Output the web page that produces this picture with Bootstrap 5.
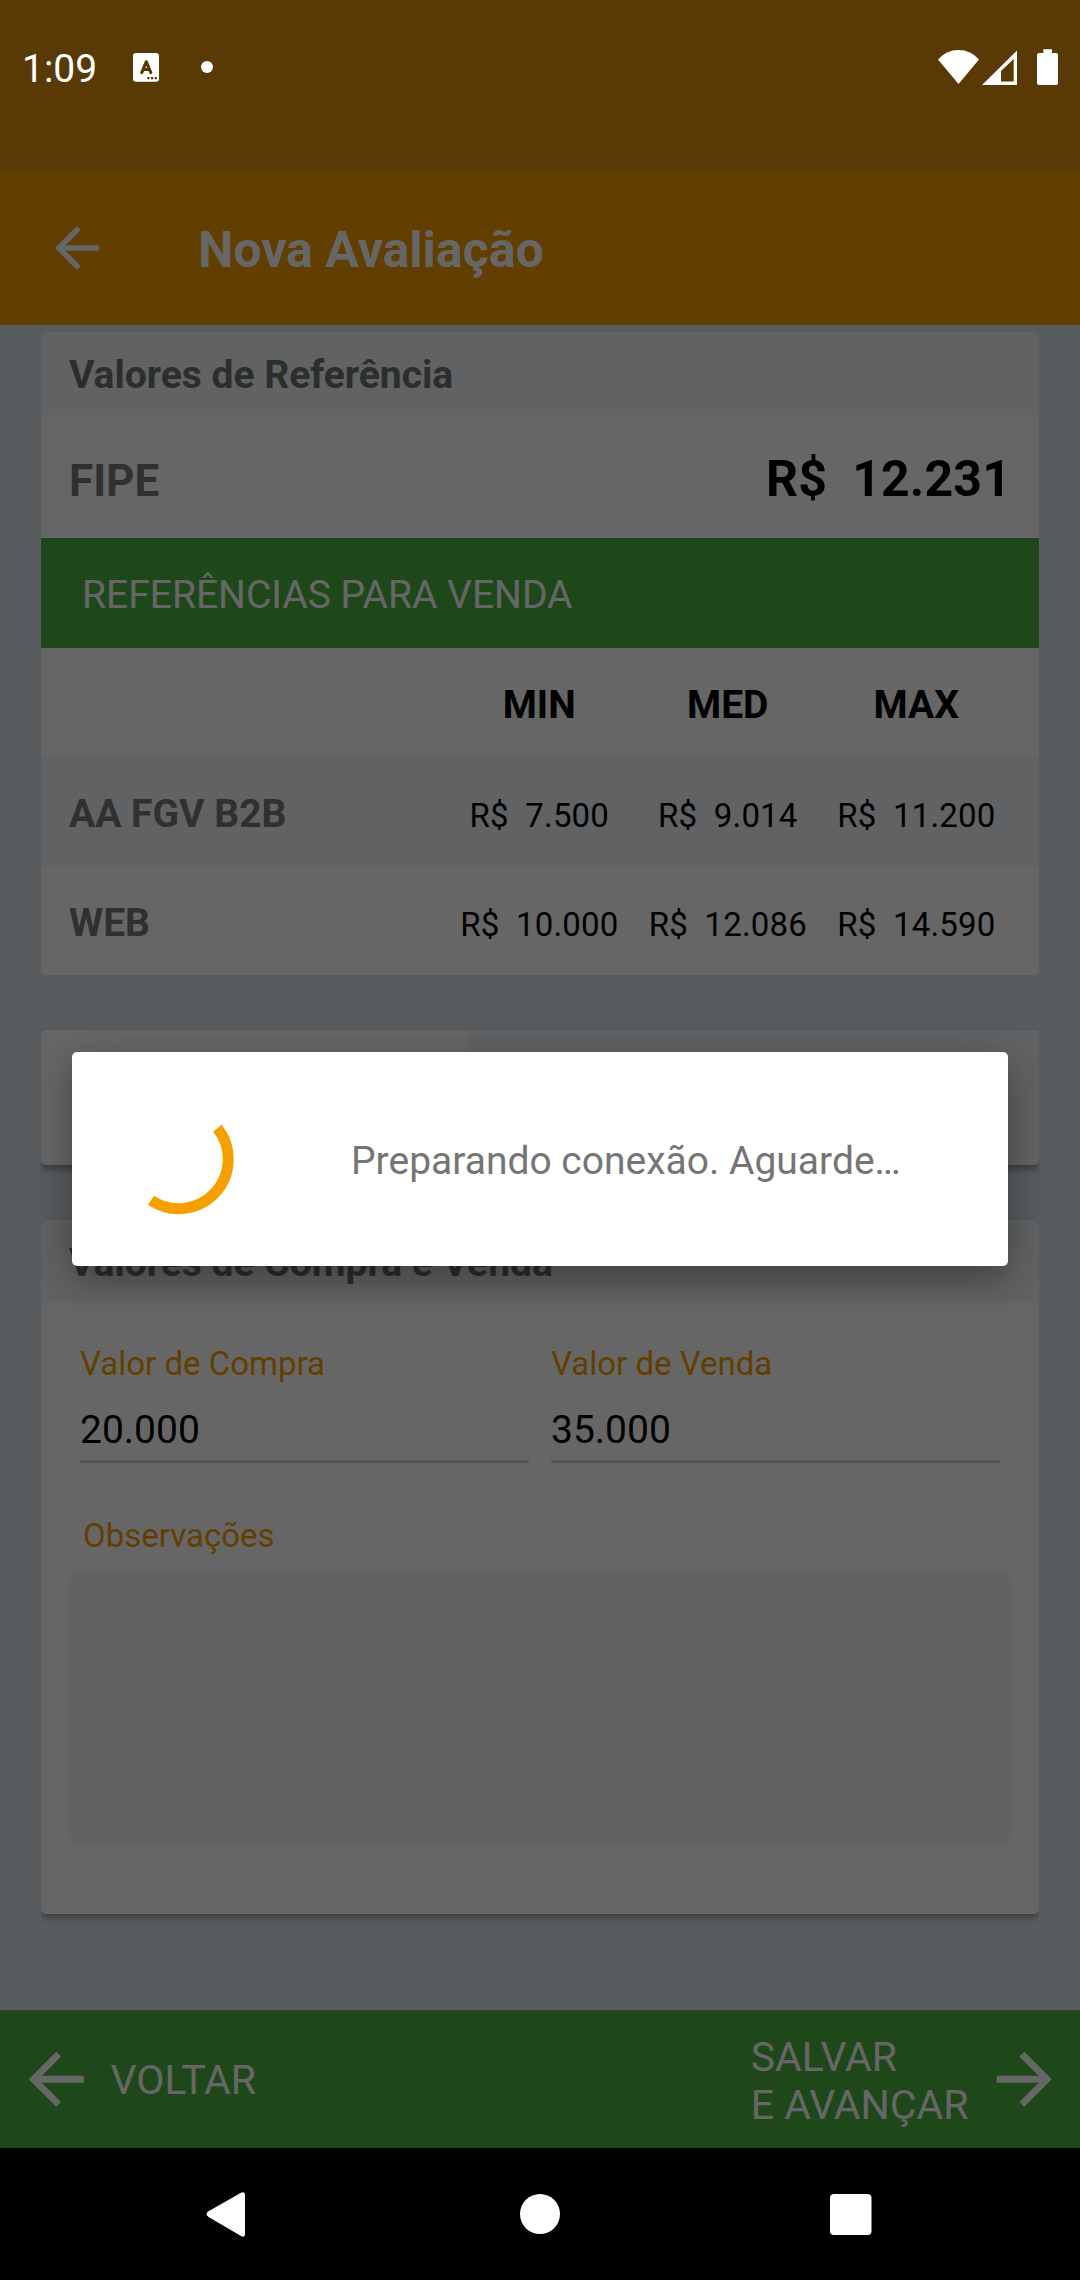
<!DOCTYPE html>
<html lang="pt-BR">
<head>
<meta charset="utf-8">
<title>Nova Avaliação</title>
<link href="https://cdn.jsdelivr.net/npm/bootstrap@5.3.0/dist/css/bootstrap.min.css" rel="stylesheet">
<style>
body{width:1080px;height:2280px;overflow:hidden;font-family:Roboto,sans-serif;font-size:39px;line-height:1.172;color:#000;background:#dde6eb}
svg{display:block;flex:none}
.screen{height:2148px}
.status-strip{height:171px;background:#de8e0a}
.app-bar{height:154px;background:#f59f00;padding:0 44px}
.app-bar h1{font-size:50px;font-weight:700;margin:4px 0 0 88px}
.content-area{padding:7px 41px 0;height:1685px}
.panel{background:#fff;border-radius:5px;box-shadow:0 4px 7px rgba(0,0,0,.35);clip-path:inset(-2px 0 -12px 0)}
.panel+.panel{margin-top:55px}
.panel.flat{box-shadow:none}
.panel-title{height:83px;background:#f2f4f8;padding:5px 28px 0;font-weight:700;color:#6e7371;border-radius:5px 5px 0 0}
.name{font-weight:700;color:#787878}
.amount{white-space:pre;letter-spacing:.15px}
.fipe-row{height:123px;padding:0 28px 0 28px}
.fipe-row .name{font-size:44px;padding-top:10px}
.fipe-row .amount{font-size:50px;padding-top:5px}
.green{background:#4bb441;color:#fff}
.section-strip{height:110px;padding:6px 41px 0}
.ref-row{height:109px;padding:6px 28px 0;display:grid;grid-template-columns:376px repeat(3,188.5px);align-items:center}
.ref-row b{text-align:center}
.ref-row .amount{font-size:33px;text-align:center;padding-top:4px}
.tinted{background:#f2f4f8}
.tab-strip{height:135px}
.tab-on{width:427px}
.form-panel{height:694px}
.fields{padding:41px 39px 0;gap:22px}
.fields>div{width:449px}
.cap{font-size:33px;color:#f59f00;line-height:39px}
.val{height:80px;padding-top:25px;line-height:45px;border-bottom:3px solid #d4d4d4}
.cap.obs{padding:53px 42px 15px}
.notes{margin:0 28px;height:275px;border-radius:14px}
.actions{height:138px;font-size:41px;padding:0 15px}
.back-label{margin-left:13px;padding-top:2px}
.next-label{margin-right:14px;padding-top:4px}
.dim{position:absolute;inset:0 0 auto 0;height:2148px;background:rgba(0,0,0,.6)}
.sys{position:absolute;inset:0 0 auto 0;height:137px;padding:2px 22px 0;color:#fff}
.loading{position:absolute;left:72px;top:1052px;width:936px;height:214px;background:#fff;border-radius:5px;color:#757575;box-shadow:0 16px 32px rgba(0,0,0,.22),0 6px 44px rgba(0,0,0,.14);padding-left:50px}
.loading span{padding-top:5px;margin-left:117px}
.nav-keys{height:132px;background:#000}
</style>
</head>
<body class="position-relative">
<main class="screen">
  <div class="status-strip"></div>
  <header class="app-bar d-flex align-items-center text-white">
    <svg width="66" height="66" viewBox="0 0 24 24" fill="#fff"><path d="M20 11H7.83l5.59-5.59L12 4l-8 8 8 8 1.41-1.41L7.83 13H20z"/></svg>
    <h1>Nova Avaliação</h1>
  </header>
  <section class="content-area">
    <div class="panel flat overflow-hidden">
      <div class="panel-title d-flex align-items-center">Valores de Referência</div>
      <div class="fipe-row d-flex justify-content-between align-items-center"><span class="name">FIPE</span><b class="amount">R$  12.231</b></div>
      <div class="green section-strip d-flex align-items-center">REFERÊNCIAS PARA VENDA</div>
      <div class="ref-row"><span></span><b>MIN</b><b>MED</b><b>MAX</b></div>
      <div class="ref-row tinted"><span class="name">AA FGV B2B</span><span class="amount">R$  7.500</span><span class="amount">R$  9.014</span><span class="amount">R$  11.200</span></div>
      <div class="ref-row"><span class="name">WEB</span><span class="amount">R$  10.000</span><span class="amount">R$  12.086</span><span class="amount">R$  14.590</span></div>
    </div>
    <div class="panel tab-strip d-flex overflow-hidden"><div class="tab-on"></div><div class="tinted flex-fill"></div></div>
    <div class="panel form-panel">
      <div class="panel-title d-flex align-items-center">Valores de Compra e Venda</div>
      <div class="fields d-flex">
        <div><div class="cap">Valor de Compra</div><div class="val">20.000</div></div>
        <div><div class="cap">Valor de Venda</div><div class="val">35.000</div></div>
      </div>
      <div class="cap obs">Observações</div>
      <div class="notes tinted"></div>
    </div>
  </section>
  <footer class="actions green d-flex align-items-center">
    <svg width="82.5" height="82.5" viewBox="0 0 24 24" fill="#fff"><path d="M20 11H7.83l5.59-5.59L12 4l-8 8 8 8 1.41-1.41L7.83 13H20z"/></svg>
    <span class="back-label">VOLTAR</span>
    <span class="next-label ms-auto">SALVAR<br>E AVANÇAR</span>
    <svg width="82.5" height="82.5" viewBox="0 0 24 24" fill="#fff"><path d="M4 11h12.17l-5.59-5.59L12 4l8 8-8 8-1.41-1.41L16.17 13H4z"/></svg>
  </footer>
</main>
<nav class="nav-keys">
  <svg width="1080" height="132" fill="#fff">
    <path d="M208.500 63.200L241 44.800Q245 43 245 47V86Q245 90 241 88L208.500 69Q204.500 66 208.500 63.200z"/>
    <circle cx="540" cy="66" r="20"/>
    <rect x="830" y="46" width="41.500" height="41" rx="4"/>
  </svg>
</nav>
<div class="dim"></div>
<div class="sys d-flex align-items-center">
  <span>1:09</span>
  <svg class="position-absolute top-0 start-0" width="1080" height="137">
    <rect x="133" y="53" width="26" height="28.700" rx="3" fill="#fff"/>
    <path d="M141.800 72.500L146.300 61.800L150.800 72.500M143.500 69.500H149" fill="none" stroke="#583804" stroke-width="3.200" stroke-linecap="round" stroke-linejoin="round"/>
    <path d="M147.300 77h2.200v2.200h-2.200zM151 77h2.200v2.200h-2.200zM154.700 77h2.200v2.200h-2.200z" fill="#583804"/>
    <circle cx="207" cy="67" r="6" fill="#fff"/>
    <path d="M958.500 84L938 59.500Q946 50 958.500 50Q971 50 979 59.500z" fill="#fff"/>
    <path fill-rule="evenodd" d="M982 85L1017 50.500V85zM1001 71V81.500H1013.700V59z" fill="#fff"/>
    <path d="M1043.300 53V49.300H1052V53H1056Q1058 53 1058 55V83Q1058 85 1056 85H1039Q1037 85 1037 83V55Q1037 53 1039 53z" fill="#fff"/>
  </svg>
</div>
<div class="loading d-flex align-items-center" role="dialog">
  <svg width="112" height="112" viewBox="0 0 112 112" fill="none" stroke="#f5a000" stroke-width="11"><path d="M95.400 25.300A49.500 49.500 0 0 1 29 97.200"/></svg>
  <span>Preparando conexão. Aguarde…</span>
</div>
<script src="https://cdn.jsdelivr.net/npm/bootstrap@5.3.0/dist/js/bootstrap.bundle.min.js"></script>
</body>
</html>
